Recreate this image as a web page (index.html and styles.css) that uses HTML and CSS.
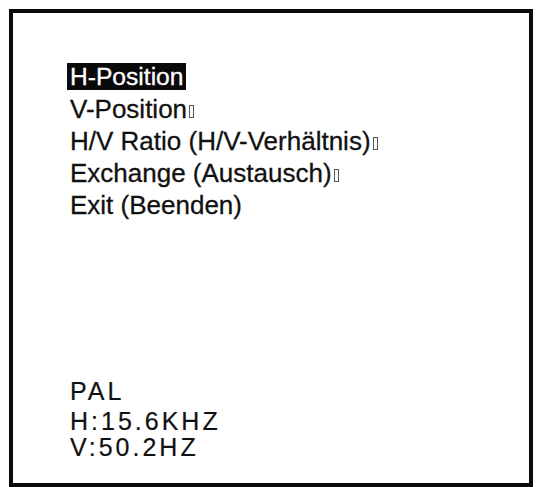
FILE: index.html
```html
<!DOCTYPE html>
<html lang="de">
<head>
<meta charset="utf-8">
<title>OSD Menu</title>
<link rel="stylesheet" href="styles.css">
</head>
<body>
<div class="frame">
  <div class="menu">
    <div class="item"><span class="selected">H-Position</span></div>
    <div class="item">V-Position<span class="glyph"></span></div>
    <div class="item">H/V Ratio (H/V-Verhältnis)<span class="glyph"></span></div>
    <div class="item">Exchange (Austausch)<span class="glyph"></span></div>
    <div class="item">Exit (Beenden)</div>
  </div>
  <div class="info">
    <div class="info-line">PAL</div>
    <div class="info-line info-h">H:15.6KHZ</div>
    <div class="info-line info-v">V:50.2HZ</div>
  </div>
</div>
</body>
</html>
```
FILE: styles.css
```css
html, body {
  margin: 0;
  padding: 0;
  background: #ffffff;
}

body {
  font-family: "Liberation Sans", Arial, sans-serif;
  color: #111111;
}

.frame {
  box-sizing: border-box;
  margin: 9px 0 0 9px;
  width: 524px;
  height: 478px;
  border: 4px solid #0a0a0a;
  padding: 47px 0 0 54px;
  display: flex;
  flex-direction: column;
}

.menu {
  font-size: 26px;
  line-height: 32px;
  -webkit-text-stroke: 0.3px #111111;
}

.item {
  padding-left: 3px;
  white-space: nowrap;
}

.selected {
  font-size: 24.6px;
  background: #0a0a0a;
  color: #ffffff;
  -webkit-text-stroke: 0.3px #ffffff;
  margin-left: -3px;
  padding: 0 3px;
}

.glyph {
  display: inline-block;
  box-sizing: border-box;
  width: 5px;
  height: 13px;
  border: 1px solid #555555;
  margin-left: 2px;
  -webkit-text-stroke: 0;
}

.info {
  margin-top: auto;
  padding: 0 0 22px 3px;
  font-size: 25px;
  line-height: 28px;
  letter-spacing: 3px;
  -webkit-text-stroke: 0.2px #111111;
}

.info-line {
  white-space: nowrap;
}

.info-h {
  margin-top: 2px;
}

.info-v {
  margin-top: -2px;
}
```
